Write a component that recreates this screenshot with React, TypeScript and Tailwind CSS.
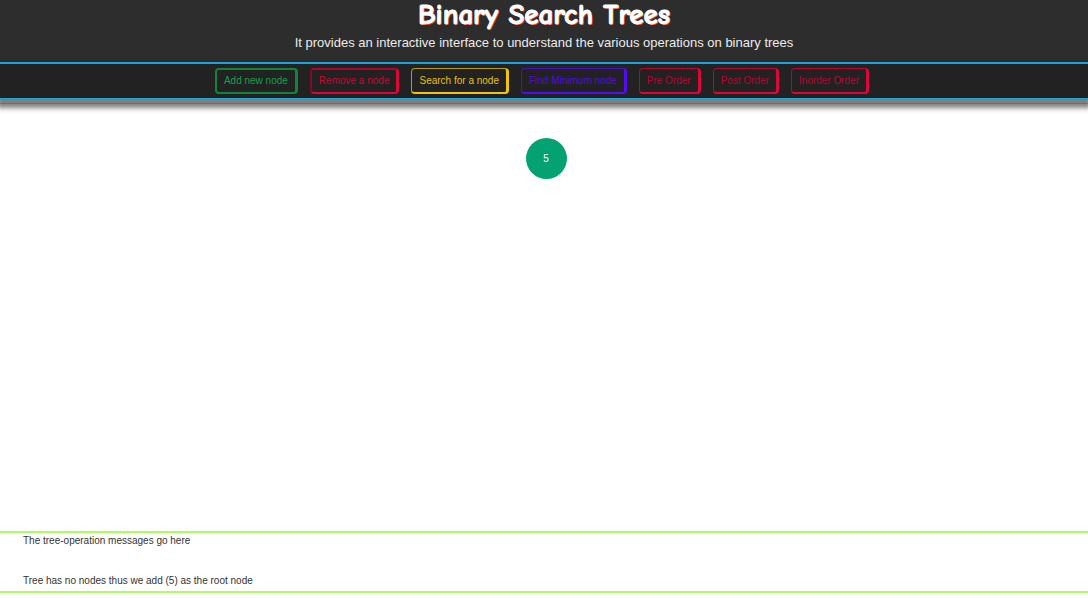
import React from "react";

type Operation = { label: string; tone: string };

const operations: Operation[] = [
  { label: "Add new node", tone: "border-2 border-r-3 border-[#12843a] text-[#14a04a]" },
  { label: "Remove a node", tone: "border-t-2 border-l-2 border-r-3 border-b-2 border-t-[#a8082f] border-l-[#7e0c28] border-r-[#dc0638] border-b-[#dc0638] text-[#c40835]" },
  { label: "Search for a node", tone: "border border-r-3 border-b-2 border-t-[#b79a10] border-l-[#b79a10] border-r-[#efc50c] border-b-[#efc50c] text-[#e6c010]" },
  { label: "Find Minimum node", tone: "border border-r-3 border-b-2 border-t-[#4912bc] border-l-[#4912bc] border-r-[#540cf2] border-b-[#540cf2] text-[#4e10d8]" },
  { label: "Pre Order", tone: "border border-r-3 border-b-2 border-t-[#b40833] border-l-[#b40833] border-r-[#dc0638] border-b-[#dc0638] text-[#b40833]" },
  { label: "Post Order", tone: "border border-r-3 border-b-2 border-t-[#b40833] border-l-[#b40833] border-r-[#dc0638] border-b-[#dc0638] text-[#b40833]" },
  { label: "Inorder Order", tone: "border border-r-3 border-b-2 border-t-[#b40833] border-l-[#b40833] border-r-[#dc0638] border-b-[#dc0638] text-[#b40833]" },
];

function Header() {
  return (
    <header className="bg-[#2d2d2d] pb-2.5 text-center">
      <h1 className="font-['Comic_Sans_MS','Comic_Neue','Noto_Sans',sans-serif] text-[29px] leading-[30px] font-bold text-white [-webkit-text-stroke:1px_white] [text-shadow:1px_1px_0_#e8481c]">
        Binary Search Trees
      </h1>
      <p className="pt-1 text-[13px] leading-[18px] text-[#ececec]">
        It provides an interactive interface to understand the various operations on binary trees
      </p>
    </header>
  );
}

function Toolbar() {
  return (
    <nav className="relative z-10 flex flex-wrap justify-center gap-3 border-y-2 border-[#1ba3dc] bg-[#222222] py-1 pr-5 pl-4 shadow-[0_5px_5px_3px_rgba(0,0,0,0.5)]">
      {operations.map((operation) => (
        <button
          key={operation.label}
          type="button"
          className={`h-[26px] rounded px-[7px] text-[10px] leading-4 whitespace-nowrap ${operation.tone}`}
        >
          {operation.label}
        </button>
      ))}
    </nav>
  );
}

function TreeNode({ value }: { value: number }) {
  return (
    <div className="flex size-[41px] items-center justify-center rounded-full bg-[#04a273] text-[10px] text-white">
      <span>{value}</span>
    </div>
  );
}

export default function App() {
  return (
    <div className="flex min-h-screen flex-col bg-white pb-[5px] font-['Liberation_Sans',Arial,sans-serif]">
      <div className="relative z-10 shrink-0">
        <Header />
        <Toolbar />
      </div>
      <main className="mt-[3px] flex flex-1 justify-center border-t border-[#adff5f] pt-[34px] pl-1">
        <TreeNode value={5} />
      </main>
      <section className="border-y-2 border-[#adff5f] px-[23px] text-[10px] leading-4 text-[#333333]">
        <p className="mb-6">The tree-operation messages go here</p>
        <p className="pb-0.5">Tree has no nodes thus we add (5) as the root node</p>
      </section>
    </div>
  );
}
